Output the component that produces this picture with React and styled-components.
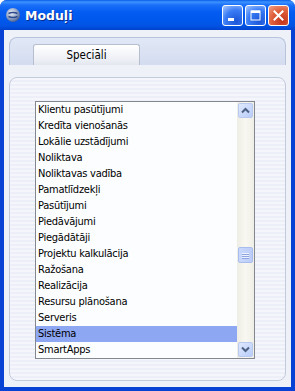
import styled, { createGlobalStyle } from "styled-components";

const GlobalStyle = createGlobalStyle`
  html, body { margin: 0; padding: 0; background: #fff; }
  body { font-family: "Liberation Sans", Arial, sans-serif; }
`;

const items = [
  "Klientu pasūtījumi",
  "Kredīta vienošanās",
  "Lokālie uzstādījumi",
  "Noliktava",
  "Noliktavas vadība",
  "Pamatlīdzekļi",
  "Pasūtījumi",
  "Piedāvājumi",
  "Piegādātāji",
  "Projektu kalkulācija",
  "Ražošana",
  "Realizācija",
  "Resursu plānošana",
  "Serveris",
  "Sistēma",
  "SmartApps",
];

const Window = styled.div`
  width: 295px;
  height: 391px;
  display: flex;
  flex-direction: column;
  background: #0842d4;
  border-radius: 7px 7px 0 0;
  overflow: hidden;
`;

const TitleBar = styled.div`
  height: 30px;
  flex: none;
  display: flex;
  align-items: center;
  padding: 0 5px 0 5px;
  background: linear-gradient(
    to bottom,
    #0a5de8 0px,
    #3d93ff 2px,
    #1a6ff8 5px,
    #045cf2 12px,
    #0058ec 20px,
    #0253e4 26px,
    #0042cc 30px
  );
`;

const TitleText = styled.div`
  flex: 1;
  margin-left: 4px;
  color: #fff;
  font-family: "DejaVu Sans", Verdana, sans-serif;
  font-weight: bold;
  font-size: 12.5px;
  text-shadow: 1px 1px 0 #0a2a8a;
`;

const Buttons = styled.div`
  display: flex;
  gap: 2px;
  margin-right: 1px;
`;

const CapButton = styled.div`
  width: 21px;
  height: 21px;
  box-sizing: border-box;
  border: 1px solid #fff;
  border-radius: 3px;
  display: flex;
  align-items: center;
  justify-content: center;
  background: ${(p) =>
    p.$close
      ? "radial-gradient(circle at 70% 80%, #c4351c 0%, #e0613d 55%, #f0a088 100%)"
      : "radial-gradient(circle at 70% 80%, #1b55d8 0%, #3a7cf5 55%, #a8c8ff 100%)"};
`;

const Client = styled.div`
  flex: 1;
  margin: 0 4px 4px 4px;
  display: flex;
  flex-direction: column;
  gap: 12px;
  padding: 7px 5px 6px 5px;
  background: #eff1f9;
`;

const TabPanel = styled.div`
  height: 28px;
  box-sizing: border-box;
  display: flex;
  align-items: flex-end;
  padding-left: 23px;
  border: 1px solid #b9c4dc;
  border-bottom: none;
  border-radius: 8px 8px 0 0;
  background: linear-gradient(to bottom, #e1e8f6, #d3dcf0);
`;

const TabButton = styled.div`
  width: 107px;
  height: 21px;
  box-sizing: border-box;
  border: 1px solid #b7bfcf;
  border-bottom: none;
  border-radius: 3px 3px 0 0;
  background: linear-gradient(to bottom, #ffffff, #eef0f6 70%, #e2e6ee);
  display: flex;
  align-items: center;
  justify-content: center;
  font-family: "DejaVu Sans Condensed", "DejaVu Sans", Tahoma, sans-serif;
  font-size: 11.5px;
  color: #000;
`;

const ContentPanel = styled.div`
  flex: 1;
  box-sizing: border-box;
  border: 1px solid #c3cadb;
  border-radius: 8px;
  padding: 23px 30px 21px 25px;
  background: repeating-linear-gradient(
    to bottom,
    #f4f6fb 0px,
    #f4f6fb 2px,
    #eceff8 2px,
    #eceff8 4px
  );
  display: flex;
`;

const ListBox = styled.div`
  flex: 1;
  display: flex;
  border: 1px solid #828790;
  background: #fbfdfe;
`;

const List = styled.div`
  flex: 1;
  display: flex;
  flex-direction: column;
`;

const Row = styled.div`
  height: 16px;
  line-height: 16px;
  padding-left: 2px;
  font-family: "DejaVu Sans Condensed", "DejaVu Sans", Tahoma, sans-serif;
  font-size: 11px;
  letter-spacing: -0.25px;
  color: #000;
  white-space: nowrap;
  background: ${(p) => (p.$selected ? "#8ea7f2" : "transparent")};
`;

const ScrollBar = styled.div`
  width: 17px;
  display: flex;
  flex-direction: column;
  align-items: center;
  padding: 1px 0;
  box-sizing: border-box;
  background: linear-gradient(to right, #eeede5, #f8f7f1 50%, #efeee6);
`;

const ScrollBtn = styled.div`
  width: 15px;
  height: 15px;
  flex: none;
  box-sizing: border-box;
  border: 1px solid #b9c9ef;
  border-radius: 2px;
  background: linear-gradient(to bottom right, #dfe8fe, #b9cdf9);
  display: flex;
  align-items: center;
  justify-content: center;
`;

const Track = styled.div`
  flex: 1;
  width: 100%;
  display: flex;
  flex-direction: column;
  padding-top: 129px;
  align-items: center;
`;

const Thumb = styled.div`
  width: 15px;
  height: 16px;
  box-sizing: border-box;
  border: 1px solid #a9bcee;
  border-radius: 2px;
  background: linear-gradient(to right, #c9d8fc, #bccdf8);
  display: flex;
  flex-direction: column;
  align-items: center;
  justify-content: center;
  gap: 1px;
`;

const Grip = styled.div`
  width: 7px;
  height: 1px;
  background: #eef3ff;
  box-shadow: 0 1px 0 #8ca4e0;
`;

const AppIcon = () => (
  <svg width="16" height="16" viewBox="0 0 16 16">
    <defs>
      <radialGradient id="ai" cx="40%" cy="35%" r="70%">
        <stop offset="0%" stopColor="#f2f5fb" />
        <stop offset="60%" stopColor="#8da0c4" />
        <stop offset="100%" stopColor="#3f5488" />
      </radialGradient>
    </defs>
    <circle cx="8" cy="8" r="7" fill="url(#ai)" />
    <path d="M3.5 6.5 Q8 4.5 12.5 6.5 M3.5 9.5 Q8 11.5 12.5 9.5" stroke="#2f4a8a" strokeWidth="1.4" fill="none" />
  </svg>
);

const MinGlyph = () => (
  <svg width="13" height="13" viewBox="0 0 13 13">
    <rect x="2" y="9" width="6" height="3" fill="#fff" />
  </svg>
);

const MaxGlyph = () => (
  <svg width="13" height="13" viewBox="0 0 13 13">
    <rect x="2" y="2" width="9" height="9" fill="none" stroke="#fff" strokeWidth="1" />
    <rect x="2" y="1.5" width="9" height="2.5" fill="#fff" />
  </svg>
);

const CloseGlyph = () => (
  <svg width="13" height="13" viewBox="0 0 13 13">
    <path d="M2.5 2.5 L10.5 10.5 M10.5 2.5 L2.5 10.5" stroke="#fff" strokeWidth="2" strokeLinecap="square" />
  </svg>
);

const Arrow = ({ up }) => (
  <svg width="9" height="7" viewBox="0 0 9 7">
    <path
      d={up ? "M1 5.5 L4.5 2 L8 5.5" : "M1 1.5 L4.5 5 L8 1.5"}
      stroke="#4d6185"
      strokeWidth="2"
      fill="none"
    />
  </svg>
);

const App = () => (
  <>
    <GlobalStyle />
    <Window>
      <TitleBar>
        <AppIcon />
        <TitleText>Moduļi</TitleText>
        <Buttons>
          <CapButton><MinGlyph /></CapButton>
          <CapButton><MaxGlyph /></CapButton>
          <CapButton $close><CloseGlyph /></CapButton>
        </Buttons>
      </TitleBar>
      <Client>
        <TabPanel>
          <TabButton>Speciāli</TabButton>
        </TabPanel>
        <ContentPanel>
          <ListBox>
            <List>
              {items.map((it) => (
                <Row key={it} $selected={it === "Sistēma"}>{it}</Row>
              ))}
            </List>
            <ScrollBar>
              <ScrollBtn><Arrow up /></ScrollBtn>
              <Track>
                <Thumb><Grip /><Grip /><Grip /></Thumb>
              </Track>
              <ScrollBtn><Arrow /></ScrollBtn>
            </ScrollBar>
          </ListBox>
        </ContentPanel>
      </Client>
    </Window>
  </>
);

export default App;
